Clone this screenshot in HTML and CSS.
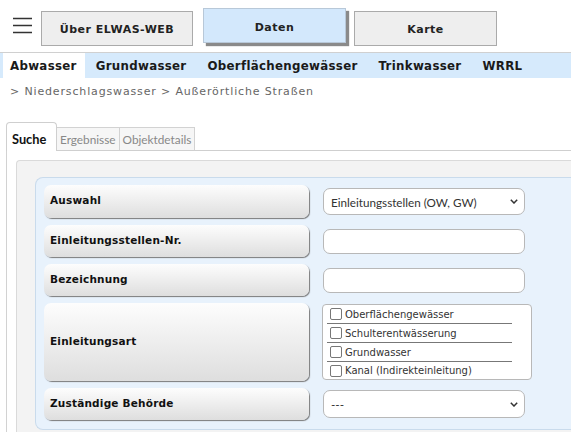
FILE: index.html
```html
<!DOCTYPE html>
<html lang="de">
<head>
<meta charset="utf-8">
<title>ELWAS-WEB</title>
<link rel="stylesheet" href="styles.css">
</head>
<body>
<header class="top">
  <svg class="burger" width="19" height="17" viewBox="0 0 19 17"><path d="M0 1.5h19M0 8.5h19M0 15.5h19" stroke="#333" stroke-width="1.6"/></svg>
  <button class="hbtn hbtn-wide">Über ELWAS-WEB</button>
  <button class="hbtn hbtn-active">Daten</button>
  <button class="hbtn">Karte</button>
</header>
<nav class="mainnav">
  <span class="navitem navitem-active">Abwasser</span>
  <span class="navitem">Grundwasser</span>
  <span class="navitem">Oberflächengewässer</span>
  <span class="navitem">Trinkwasser</span>
  <span class="navitem">WRRL</span>
</nav>
<div class="crumbs">&gt; Niederschlagswasser &gt; Außerörtliche Straßen</div>
<div class="tabs">
  <div class="tab tab-active">Suche</div>
  <div class="tab">Ergebnisse</div>
  <div class="tab">Objektdetails</div>
  <div class="tabfill"></div>
</div>
<div class="tabpanel">
  <div class="container">
    <div class="formbox">
      <div class="row row-first">
        <div class="label">Auswahl</div>
        <div class="field select"><span>Einleitungsstellen (OW, GW)</span><svg width="8" height="5" viewBox="0 0 8 5"><path d="M0.8 0.8l3.2 3.2 3.2-3.2" fill="none" stroke="#333" stroke-width="1.5"/></svg></div>
      </div>
      <div class="row">
        <div class="label">Einleitungsstellen-Nr.</div>
        <div class="field input"></div>
      </div>
      <div class="row">
        <div class="label">Bezeichnung</div>
        <div class="field input"></div>
      </div>
      <div class="row">
        <div class="label">Einleitungsart</div>
        <div class="checks">
          <label class="check"><span class="box"></span>Oberflächengewässer</label>
          <label class="check"><span class="box"></span>Schulterentwässerung</label>
          <label class="check"><span class="box"></span>Grundwasser</label>
          <label class="check check-last"><span class="box"></span>Kanal (Indirekteinleitung)</label>
        </div>
      </div>
      <div class="row">
        <div class="label">Zuständige Behörde</div>
        <div class="field select select-2"><span>---</span><svg width="8" height="5" viewBox="0 0 8 5"><path d="M0.8 0.8l3.2 3.2 3.2-3.2" fill="none" stroke="#333" stroke-width="1.5"/></svg></div>
      </div>
    </div>
  </div>
</div>
</body>
</html>
```

FILE: styles.css
```css
html, body {
  margin: 0;
  padding: 0;
  background: #fff;
  width: 571px;
  height: 432px;
  overflow: hidden;
}
body {
  font-family: "DejaVu Sans", Verdana, sans-serif;
  color: #111;
}
.top {
  display: flex;
  align-items: flex-start;
  height: 52px;
  padding-left: 13px;
  box-sizing: border-box;
}
.burger {
  margin-top: 17px;
  margin-right: 9px;
}
.hbtn {
  font-family: "DejaVu Sans", Verdana, sans-serif;
  font-weight: bold;
  font-size: 11px;
  letter-spacing: 0.5px;
  color: #222;
  width: 143px;
  height: 35px;
  margin-top: 11px;
  margin-right: 8px;
  background: #eeeeee;
  border: 1px solid #aaa;
  padding: 1px 0 0 0;
}
.hbtn-wide {
  width: 152px;
  margin-right: 10px;
}
.hbtn-active {
  margin-top: 8px;
  padding-top: 4px;
  background: #d3e8fc;
  border-color: #b8c8d8;
  box-shadow: 3px 3px 1px #8a8a8a;
}
.mainnav {
  display: flex;
  border-top: 1px solid #d0d0d0;
  background: #d6eafc;
  height: 25px;
  padding-left: 3px;
}
.navitem {
  display: flex;
  align-items: center;
  padding: 0 7px;
  margin-right: 7px;
  font-weight: bold;
  font-size: 11.8px;
  letter-spacing: 0.3px;
  color: #1a1a1a;
}
.navitem-active {
  background: #fff;
  margin-right: 4px;
  padding-right: 8px;
}
.crumbs {
  font-size: 11px;
  letter-spacing: 0.85px;
  color: #666;
  padding: 7px 0 0 10px;
  height: 43px;
  box-sizing: border-box;
}
.tabs {
  display: flex;
  align-items: flex-end;
  height: 30px;
  margin-left: 6px;
  font-family: Lato, "Open Sans", sans-serif;
  font-size: 11.8px;
}
.tab {
  height: 22px;
  display: flex;
  align-items: center;
  padding: 0 3px;
  color: #888;
  background: #f6f6f6;
  border: 1px solid #d2d2d2;
  border-left: none;
  border-bottom: 1px solid #cfcfcf;
}
.tab-active {
  height: 29px;
  padding: 4px 6px 0 5px;
  box-sizing: border-box;
  border: 1px solid #cfcfcf;
  border-bottom: none;
  border-radius: 4px 4px 0 0;
  background: #fff;
  color: #111;
  font-weight: bold;
  font-size: 12.8px;
  width: 51px;
}
.tabfill {
  flex: 1;
  border-bottom: 1px solid #cfcfcf;
}
.tabpanel {
  margin-left: 6px;
  border-left: 1px solid #d2d2d2;
  padding: 9px 0 0 9px;
}
.container {
  background: #f3f3f3;
  border: 1px solid #dadada;
  border-right: none;
  border-radius: 4px 0 0 0;
  padding: 16px 0 4px 18px;
}
.formbox {
  background: #e8f2fc;
  border: 1px solid #c9dbec;
  border-right: none;
  border-radius: 8px 0 0 8px;
  padding: 7px 0 9px 8px;
  display: flex;
  flex-direction: column;
  gap: 7px;
}
.row {
  display: flex;
  align-items: stretch;
}
.row-first .label {
  min-height: 33px;
}
.label {
  width: 265px;
  min-height: 32px;
  box-sizing: border-box;
  display: flex;
  align-items: center;
  padding: 0 6px 3px 6px;
  border-radius: 7px;
  background: linear-gradient(#fdfdfd, #dedede);
  box-shadow: 1px 1px 1px #7a7a7a;
  font-weight: bold;
  font-size: 10.5px;
  letter-spacing: 0.2px;
  color: #111;
  margin-right: 14px;
}
.field {
  width: 202px;
  height: 25px;
  box-sizing: border-box;
  align-self: center;
  background: #fff;
  border: 1px solid #b8b8b8;
  border-radius: 7px;
}
.select {
  height: 27px;
  display: flex;
  align-items: center;
  justify-content: space-between;
  padding: 0 6px 0 7px;
  font-family: Lato, "Open Sans", sans-serif;
  font-size: 11.7px;
  color: #333;
}
.select-2 {
  height: 28px;
}
.checks {
  width: 210px;
  box-sizing: border-box;
  margin: 1px 0 1px -1px;
  background: #fff;
  border: 1px solid #b8b8b8;
  border-radius: 4px;
  padding: 0 19px 0 4px;
  display: flex;
  flex-direction: column;
}
.check {
  display: flex;
  align-items: center;
  height: 18px;
  border-bottom: 1px solid #777;
  font-size: 10px;
  color: #333;
}
.check-last {
  height: 17px;
  border-bottom: none;
}
.box {
  width: 10px;
  height: 10px;
  border: 1px solid #777;
  border-radius: 2px;
  margin: 0 3px 0 3px;
  background: #fff;
}
```
